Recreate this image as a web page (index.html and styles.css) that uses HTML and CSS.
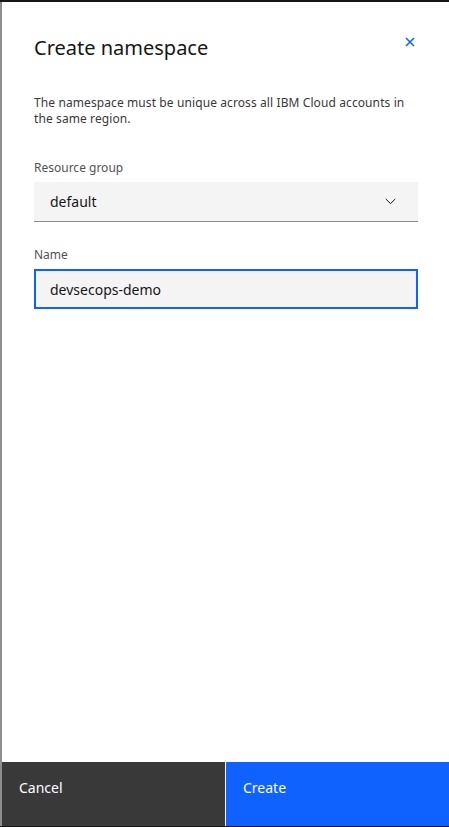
FILE: index.html
```html
<!DOCTYPE html>
<html>
<head>
<meta charset="utf-8">
<link rel="stylesheet" href="styles.css">
</head>
<body>
<div class="frame">
  <div class="modal">
    <div class="header">
      <h2 class="title">Create namespace</h2>
      <button class="close" aria-label="Close">
        <svg width="10" height="10" viewBox="0 0 10 10"><path d="M1 1 L9 9 M9 1 L1 9" stroke="#0f62fe" stroke-width="1.6" fill="none"/></svg>
      </button>
    </div>
    <div class="content">
      <p class="desc">The namespace must be unique across all IBM Cloud accounts in the same region.</p>
      <div class="field">
        <label class="label">Resource group</label>
        <div class="select">
          <span>default</span>
          <svg width="11" height="7" viewBox="0 0 11 7"><path d="M0.8 1 L5.5 5.6 L10.2 1" stroke="#161616" stroke-width="1" fill="none"/></svg>
        </div>
      </div>
      <div class="field">
        <label class="label">Name</label>
        <div class="input">devsecops-demo</div>
      </div>
    </div>
    <div class="footer">
      <button class="btn secondary">Cancel</button>
      <button class="btn primary">Create</button>
    </div>
  </div>
</div>
</body>
</html>
```
FILE: styles.css
```css
* { box-sizing: border-box; }
html, body { margin: 0; padding: 0; }
body {
  background: #161616;
  width: 449px;
  height: 827px;
  overflow: hidden;
  font-family: "Noto Sans", "Open Sans", sans-serif;
  color: #161616;
}
.frame {
  margin-top: 2px;
  height: 824px;
  border-left: 2px solid #8d8d8d;
  background: #ffffff;
}
.modal {
  height: 100%;
  display: flex;
  flex-direction: column;
}
.header {
  display: flex;
  justify-content: space-between;
  align-items: flex-start;
  padding: 32px 32px 0 32px;
}
.title {
  margin: 0;
  font-size: 20px;
  font-weight: 400;
  line-height: 28px;
  color: #161616;
}
.close {
  border: 0;
  background: none;
  padding: 0;
  margin-top: 3px;
  margin-right: 2px;
  width: 10px;
  height: 10px;
  display: flex;
}
.content {
  flex: 1;
  padding: 0 31px 0 32px;
}
.desc {
  margin: 33px 0 0 0;
  font-size: 12px;
  line-height: 16px;
  color: #393939;
  letter-spacing: 0.1px;
}
.field { margin-top: 33px; }
.field + .field { margin-top: 25px; }
.label {
  display: block;
  font-size: 12px;
  line-height: 16px;
  color: #525252;
  margin-bottom: 6px;
}
.select {
  height: 40px;
  background: #f4f4f4;
  border-bottom: 1px solid #8d8d8d;
  display: flex;
  align-items: center;
  justify-content: space-between;
  padding: 0 22px 0 16px;
  font-size: 14px;
}
.input {
  height: 40px;
  background: #f4f4f4;
  border: 2px solid #0f62fe;
  display: flex;
  align-items: center;
  padding: 0 14px;
  font-size: 14px;
}
.footer {
  display: flex;
  gap: 1px;
  height: 64px;
  background: #ffffff;
}
.btn {
  flex: 1;
  border: 0;
  font-family: inherit;
  font-size: 14px;
  line-height: 18px;
  color: #ffffff;
  text-align: left;
  padding: 17px 17px 0 17px;
  display: flex;
  align-items: flex-start;
  margin: 0;
}
.secondary { background: #393939; }
.primary { background: #0f62fe; }
```
